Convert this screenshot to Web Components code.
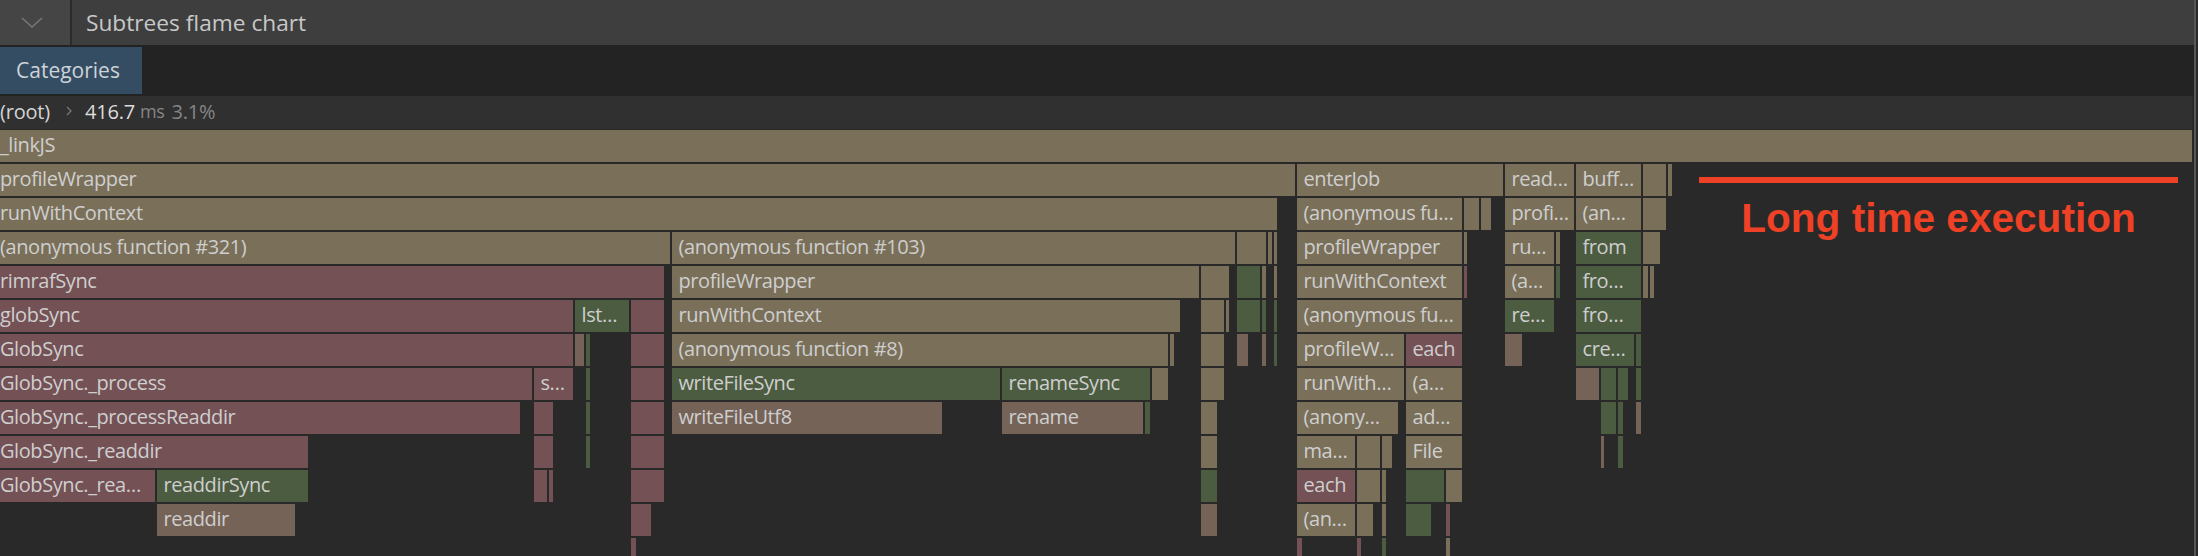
<!doctype html>
<html><head><meta charset="utf-8">
<style>
html,body{margin:0;padding:0;background:#292929;overflow:hidden}
body{font-family:"Open Sans","Liberation Sans",sans-serif;font-size:20px;color:#c9c9c9}
</style></head>
<body>
<profiler-panel>
  <panel-header>Subtrees flame chart</panel-header>
  <category-bar><category-tab>Categories</category-tab></category-bar>
  <flame-breadcrumb time="416.7" unit="ms" percent="3.1%">(root)</flame-breadcrumb>
  <flame-chart></flame-chart>
  <chart-note>Long time execution</chart-note>
</profiler-panel>
<script>
const T='#7a7059',R='#745155',G='#4c5c40',B='#766358';
const rows=[
[[0,2192,T,'_linkJS']],
[[0,1295,T,'profileWrapper'],[1297,1503,T,'enterJob'],[1505,1574,T,'read…'],[1576,1641,T,'buff…'],[1643,1666,T],[1668,1672,T]],
[[0,1277,T,'runWithContext'],[1297,1462,T,'(anonymous fu…'],[1464,1479,T],[1481,1491,T],[1505,1574,T,'profi…'],[1576,1641,T,'(an…'],[1643,1666,T]],
[[0,670,T,'(anonymous function #321)'],[672,1235,T,'(anonymous function #103)'],[1237,1266,T],[1268,1272,T],[1274,1277,T],[1297,1462,T,'profileWrapper'],[1464,1467,T],[1505,1554,T,'ru…'],[1556,1560,T],[1576,1641,G,'from'],[1643,1660,T]],
[[0,664,R,'rimrafSync'],[672,1199,T,'profileWrapper'],[1201,1229,T],[1237,1260,G],[1262,1266,T],[1274,1277,T],[1297,1462,T,'runWithContext'],[1464,1467,R],[1505,1554,T,'(a…'],[1556,1560,G],[1576,1641,G,'fro…'],[1643,1648,T],[1650,1654,T]],
[[0,573,R,'globSync'],[575,629,G,'lst…'],[631,664,R],[672,1180,T,'runWithContext'],[1201,1224,T],[1226,1229,T],[1237,1260,G],[1262,1266,G],[1274,1277,G],[1297,1462,T,'(anonymous fu…'],[1505,1554,G,'re…'],[1576,1641,G,'fro…']],
[[0,573,R,'GlobSync'],[575,584,B],[586,590,G],[631,664,R],[672,1168,T,'(anonymous function #8)'],[1170,1174,T],[1201,1224,T],[1237,1248,B],[1262,1266,B],[1274,1277,G],[1297,1404,T,'profileW…'],[1406,1462,R,'each'],[1505,1522,B],[1576,1634,G,'cre…'],[1636,1641,G]],
[[0,532,R,'GlobSync._process'],[534,573,R,'s…'],[586,590,G],[631,664,R],[672,1000,G,'writeFileSync'],[1002,1150,G,'renameSync'],[1152,1168,T],[1201,1224,T],[1297,1404,T,'runWith…'],[1406,1462,T,'(a…'],[1576,1599,B],[1601,1616,G],[1618,1628,G],[1636,1641,G]],
[[0,520,R,'GlobSync._processReaddir'],[534,553,R],[586,590,G],[631,664,R],[672,942,B,'writeFileUtf8'],[1002,1143,B,'rename'],[1145,1150,G],[1201,1217,T],[1297,1398,T,'(anony…'],[1406,1462,T,'ad…'],[1601,1616,G],[1618,1623,G],[1636,1641,B]],
[[0,308,R,'GlobSync._readdir'],[534,553,R],[586,590,G],[631,664,R],[1201,1217,T],[1297,1355,T,'ma…'],[1357,1380,T],[1382,1392,T],[1406,1462,T,'File'],[1601,1604,B],[1618,1623,G]],
[[0,155,R,'GlobSync._rea…'],[157,308,G,'readdirSync'],[534,547,R],[549,553,R],[631,664,R],[1201,1217,G],[1297,1355,R,'each'],[1357,1380,T],[1382,1386,T],[1406,1444,G],[1446,1462,T]],
[[157,295,B,'readdir'],[631,651,R],[1201,1217,B],[1297,1355,T,'(an…'],[1357,1373,T],[1382,1386,T],[1406,1431,G],[1446,1450,R]],
[[631,636,R],[1297,1302,R],[1357,1361,R],[1382,1386,G],[1446,1450,T]]
];
function shadow(el,html){el.attachShadow({mode:'open'}).innerHTML=html;return el.shadowRoot}
customElements.define('profiler-panel',class extends HTMLElement{connectedCallback(){shadow(this,`<style>
:host{display:flex;width:2198px;height:556px;overflow:hidden;position:relative;background:#292929}
.main{width:2194px;display:flex;flex-direction:column;flex:none;height:556px}
.track{width:2px;background:#565656;flex:none}
</style><div class="main"><slot></slot></div><div class="track"></div>`)}});
customElements.define('panel-header',class extends HTMLElement{connectedCallback(){shadow(this,`<style>
:host{display:flex;height:45px;background:#3e3e3e;flex:none}
.toggle{width:64px;padding-right:6px;background:#454545;border-right:2px solid #2b2b2b;display:flex;align-items:center;justify-content:center}
.title{padding-left:14px;line-height:45px;font-size:22.7px;color:#c8c8c8}
svg{display:block}
</style><div class="toggle"><svg width="22" height="11" viewBox="0 0 22 11"><path d="M1 1 L11 10 L21 1" fill="none" stroke="#777" stroke-width="1.6"/></svg></div><div class="title"><slot></slot></div>`)}});
customElements.define('category-bar',class extends HTMLElement{connectedCallback(){shadow(this,`<style>
:host{display:flex;height:47px;padding:2px 0;background:#232323;flex:none}
</style><slot></slot>`)}});
customElements.define('category-tab',class extends HTMLElement{connectedCallback(){shadow(this,`<style>
:host{display:block;width:126px;padding-left:16px;line-height:47px;background:#354d63;color:#cdd3d8;font-size:21px}
</style><slot></slot>`)}});
customElements.define('flame-breadcrumb',class extends HTMLElement{connectedCallback(){const a=k=>this.getAttribute(k);shadow(this,`<style>
:host{display:flex;align-items:center;width:2192px;height:33px;padding-bottom:3px;box-sizing:border-box;background:#303030;flex:none;font-size:20px;letter-spacing:-.2px;color:#d4d4d4;margin-bottom:1px}
svg{margin:0 13px 0 16px;display:block}
.v{color:#dcdcdc;margin-right:5px}.d{color:#868686}
.u{font-size:18px;letter-spacing:-.4px;margin-right:7px}
</style><slot></slot><svg width="6" height="10" viewBox="0 0 6 10"><path d="M1 1 L5 5 L1 9" fill="none" stroke="#777" stroke-width="1.3"/></svg><span class="v">${a('time')}</span><span class="d u">${a('unit')}</span><span class="d">${a('percent')}</span>`)}});
customElements.define('flame-bar',class extends HTMLElement{connectedCallback(){const s=+this.getAttribute('start'),e=+this.getAttribute('end'),l=this.textContent.length>0;shadow(this,`<style>
:host{display:block;flex:none;box-sizing:border-box;height:32px;line-height:30px;overflow:hidden;white-space:nowrap;font-size:20px;letter-spacing:-.42px;color:#cecece;
width:${e-s}px;background:${this.getAttribute('color')};padding-left:${s===0||!l?0:6.5}px}
</style><slot></slot>`)}});
customElements.define('flame-row',class extends HTMLElement{connectedCallback(){shadow(this,`<style>
:host{display:flex;height:32px;margin-bottom:2px;flex:none}
</style><slot></slot>`)}});
customElements.define('flame-chart',class extends HTMLElement{connectedCallback(){
  shadow(this,`<style>:host{display:block;flex:1;min-height:0;overflow:hidden}</style><slot></slot>`);
  for(const r of rows){const row=document.createElement('flame-row');let x=0;
    for(const [s,e,c,l] of r){const b=document.createElement('flame-bar');b.setAttribute('start',s);b.setAttribute('end',e);b.setAttribute('color',c);if(l)b.textContent=l;b.style.marginLeft=(s-x)+'px';row.appendChild(b);x=e}
    this.appendChild(row)}
}});
customElements.define('chart-note',class extends HTMLElement{connectedCallback(){shadow(this,`<style>
:host{position:absolute;left:1699px;top:177px;width:479px;display:block;font-family:"Liberation Sans",Arial,sans-serif;font-weight:700;color:#ee4125}
.line{height:6px;background:#ee4125}
.t{text-align:center;font-size:40.6px;line-height:46px;margin-top:12px;white-space:nowrap}
</style><div class="line"></div><div class="t"><slot></slot></div>`)}});
</script>
</body></html>
